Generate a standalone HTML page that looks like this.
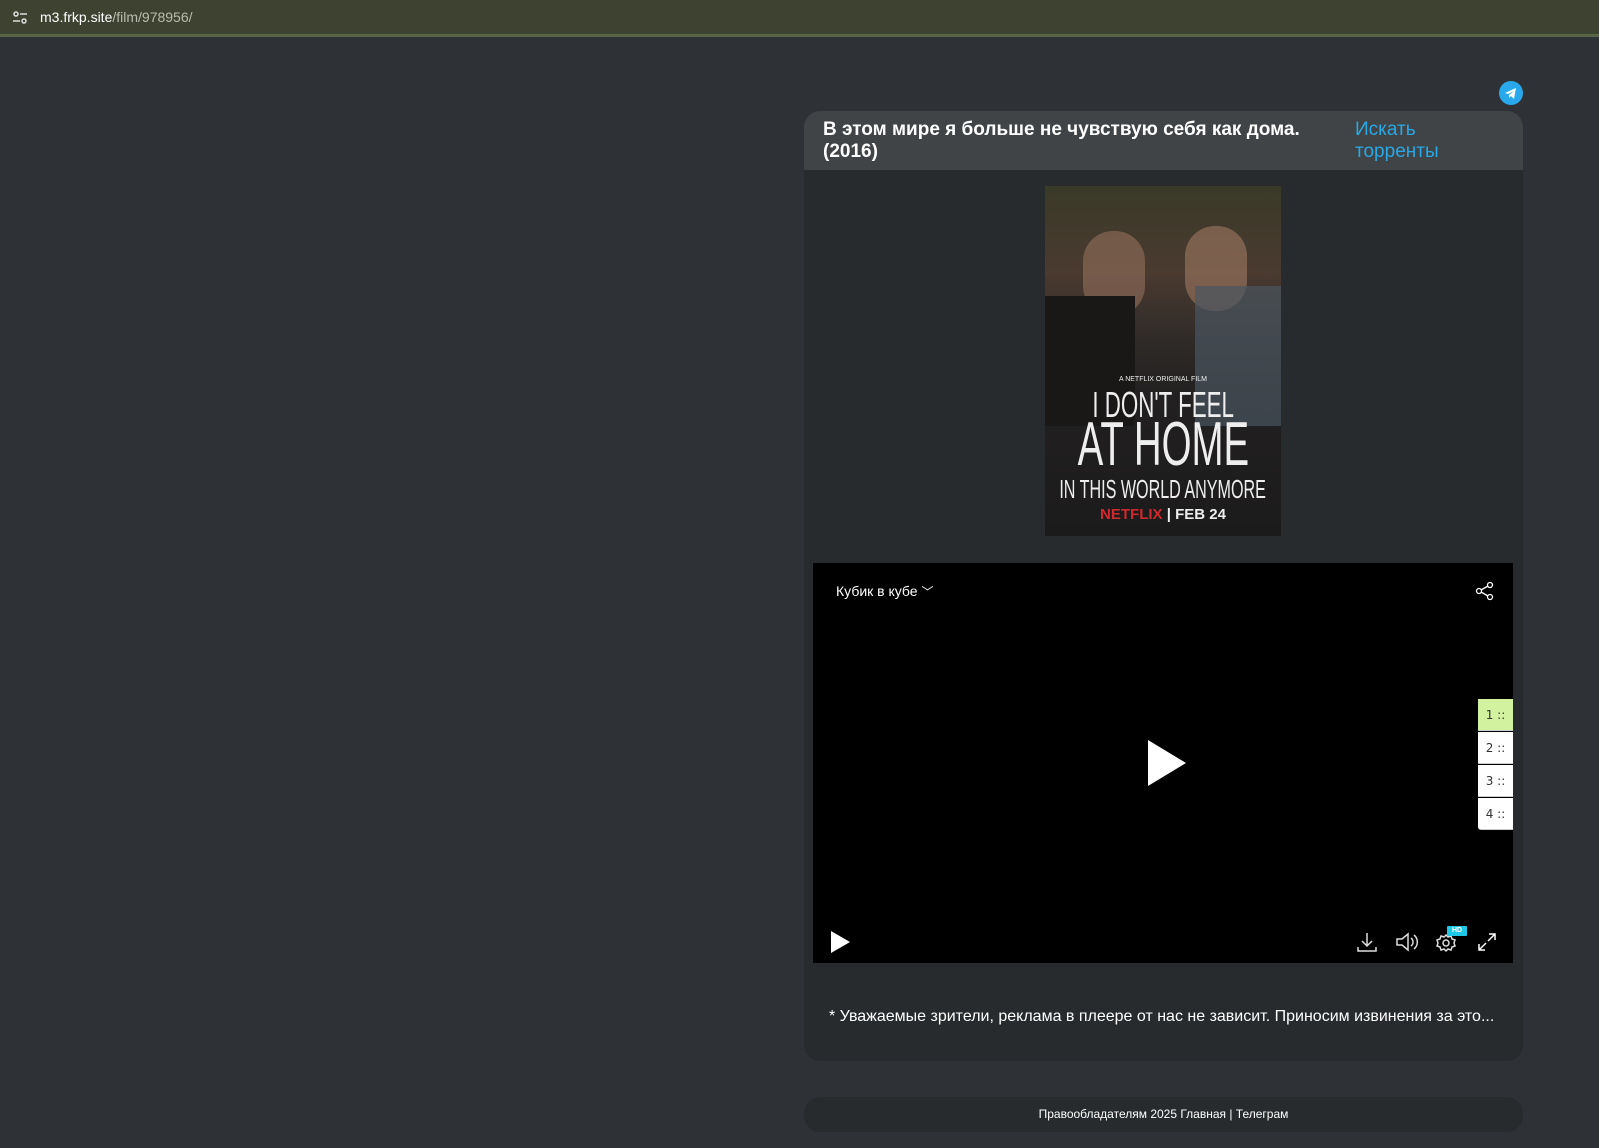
<!DOCTYPE html>
<html><head><meta charset="utf-8"><style>
*{margin:0;padding:0;box-sizing:border-box}
body{width:1599px;height:1148px;background:#2e3236;font-family:"Liberation Sans",Arial,sans-serif;position:relative;overflow:hidden}
.bar{position:absolute;left:0;top:0;width:1599px;height:37px;background:#3d4330;border-bottom:3px solid #5a6447}
.url{position:absolute;left:40px;top:9px;font-size:14px;color:#fff}
.url span{color:#b9bdb0}
.card{position:absolute;left:804px;top:111px;width:719px;height:950px;background:#272b2d;border-radius:16px;overflow:hidden}
.hdr{height:59px;background:#404447;position:relative}
.t{position:absolute;left:19px;top:8px;width:490px;font-weight:bold;font-size:19px;line-height:22px;color:#fff}
.s{position:absolute;left:551px;top:8px;font-size:19px;line-height:22px;color:#28a8e4}
.poster{position:absolute;left:241px;top:75px;width:236px;height:350px;background:linear-gradient(180deg,#3a3a28 0%,#4a3a30 25%,#2e2a28 45%,#222020 60%,#1c1b1b 100%);overflow:hidden;color:#eee}
.pt{position:absolute;left:-150px;width:536px;text-align:center;white-space:nowrap}
.pt span{display:inline-block;transform:scaleX(.62)}
.player{position:absolute;left:9px;top:452px;width:700px;height:400px;background:#000}
.note{position:absolute;left:25px;top:897px;font-size:16px;color:#fff;white-space:nowrap}
.ep{position:absolute;right:0;width:35px;height:32px;background:#fff;border-bottom:1px solid #ccc;font-size:12px;color:#333;line-height:32px;text-align:center;font-family:"DejaVu Sans",sans-serif}
.foot{position:absolute;left:804px;top:1097px;width:719px;height:35px;background:#272b2d;border-radius:16px;text-align:center;font-size:12px;line-height:35px;color:#fff}
</style></head><body>
<div class="bar">
<svg style="position:absolute;left:12px;top:10px" width="16" height="16" viewBox="0 0 16 16" fill="none" stroke="#ddd" stroke-width="1.5"><circle cx="4" cy="4" r="2"/><line x1="8" y1="4" x2="15" y2="4"/><circle cx="12" cy="11" r="2"/><line x1="1" y1="11" x2="8" y2="11"/></svg>
<div class="url">m3.frkp.site<span>/film/978956/</span></div></div>
<svg style="position:absolute;left:1499px;top:81px" width="24" height="24" viewBox="0 0 24 24"><circle cx="12" cy="12" r="12" fill="#29a9eb"/><path d="M6 12l11-5-2 11-3-3-2 2v-3l5-4-6 3z" fill="#fff"/></svg>
<div class="card">
<div class="hdr"><div class="t">В этом мире я больше не чувствую себя как дома. (2016)</div><div class="s">Искать<br>торренты</div></div>
<div class="poster">
<div style="position:absolute;left:38px;top:45px;width:62px;height:85px;border-radius:30px;background:#9a7560;opacity:.55"></div>
<div style="position:absolute;left:140px;top:40px;width:62px;height:85px;border-radius:30px;background:#a88068;opacity:.55"></div>
<div style="position:absolute;left:0;top:110px;width:90px;height:130px;background:#1a1817"></div>
<div style="position:absolute;left:150px;top:100px;width:86px;height:140px;background:#4a5560;opacity:.7"></div>
<div class="pt" style="top:190px;font-size:7px">A NETFLIX ORIGINAL FILM</div>
<div class="pt" style="top:198px;font-size:36px"><span>I DON'T FEEL</span></div>
<div class="pt" style="top:228px;font-size:62px;line-height:62px"><span>AT HOME</span></div>
<div class="pt" style="top:288px;font-size:26px"><span>IN THIS WORLD ANYMORE</span></div>
<div class="pt" style="top:320px;font-size:15px;font-weight:bold"><span style="transform:none"><span style="color:#d0282c;transform:none">NETFLIX</span> | FEB 24</span></div>
</div>
<div class="player">
<div style="position:absolute;left:23px;top:20px;color:#fff;font-size:14px">Кубик в кубе <span style="font-size:12px">﹀</span></div>
<svg style="position:absolute;left:662px;top:18px" width="20" height="20" viewBox="0 0 20 20" fill="none" stroke="#fff" stroke-width="1.3"><circle cx="15" cy="4" r="2.5"/><circle cx="4" cy="10" r="2.5"/><circle cx="15" cy="16" r="2.5"/><path d="M6 9l7-4M6 11l7 4"/></svg>
<svg style="position:absolute;left:333px;top:177px" width="40" height="46" viewBox="0 0 40 46"><path d="M2 0L40 23L2 46Z" fill="#fff"/></svg>
<div class="ep" style="top:136px;background:#d3f2a0">1 ::</div>
<div class="ep" style="top:169px">2 ::</div>
<div class="ep" style="top:202px">3 ::</div>
<div class="ep" style="top:235px;border-radius:0 0 0 3px">4 ::</div>
<svg style="position:absolute;left:17px;top:368px" width="20" height="22" viewBox="0 0 20 22"><path d="M1 0L20 11L1 22Z" fill="#fff"/></svg>
<svg style="position:absolute;left:543px;top:368px" width="22" height="22" viewBox="0 0 22 22" fill="none" stroke="#ddd" stroke-width="1.5"><path d="M11 2v13M6 10l5 5 5-5M2 16v4h18v-4"/></svg>
<svg style="position:absolute;left:582px;top:368px" width="24" height="22" viewBox="0 0 24 22" fill="none" stroke="#ddd" stroke-width="1.5"><path d="M2 8h5l6-5v16l-6-5H2z"/><path d="M16 7a5 5 0 0 1 0 8M19 4a9 9 0 0 1 0 14"/></svg>
<svg style="position:absolute;left:622px;top:368px" width="22" height="22" viewBox="0 0 22 22" fill="none" stroke="#ddd" stroke-width="1.5"><circle cx="11" cy="12" r="3"/><path d="M11 4l2 2 3-1 1 3 3 1-1 3 1 3-3 1-1 3-3-1-2 2-2-2-3 1-1-3-3-1 1-3-1-3 3-1 1-3 3 1z"/></svg>
<div style="position:absolute;left:634px;top:363px;width:20px;height:10px;background:#1ec8e6;color:#fff;font-size:7px;font-weight:bold;text-align:center;line-height:10px;border-radius:1px">HD</div>
<svg style="position:absolute;left:664px;top:369px" width="20" height="20" viewBox="0 0 20 20" fill="none" stroke="#fff" stroke-width="1.5"><path d="M12 2h6v6M18 2l-7 7M8 18H2v-6M2 18l7-7"/></svg>
</div>
<div class="note">* Уважаемые зрители, реклама в плеере от нас не зависит. Приносим извинения за это...</div>
</div>
<div class="foot">Правообладателям 2025 Главная | Телеграм</div>
</body></html>
